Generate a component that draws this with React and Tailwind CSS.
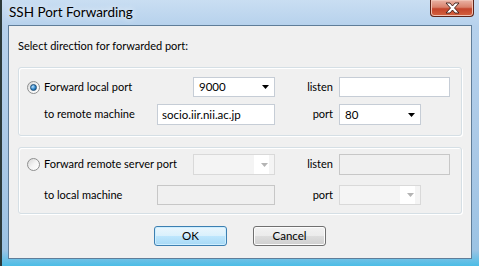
import React from 'react';

const font = { fontFamily: 'Lato, "Noto Sans", sans-serif' };

function Radio({ checked }) {
  return (
    <span className="relative flex h-[13px] w-[13px] shrink-0 items-center justify-center rounded-full border border-[#8e8f8f] bg-gradient-to-br from-[#d6d6d6] via-[#f4f4f4] to-[#ffffff]">
      {checked && (
        <span className="h-[7px] w-[7px] rounded-full border border-[#1b4d76] bg-[radial-gradient(circle_at_35%_35%,#bfe3ff,#2a83c8_55%,#0e4d8a)]" />
      )}
    </span>
  );
}

function Combo({ value, width, height, disabled }) {
  return (
    <div
      className={`flex items-center justify-between border pl-[5px] pr-[5px] ${
        disabled ? 'border-[#d9d9d9] bg-[#f4f4f4]' : 'border-[#c6cdd6] bg-white'
      }`}
      style={{ width, height }}
    >
      <span className="text-[11.5px] leading-none text-black">{value}</span>
      <div className={`flex h-full items-center ${disabled ? 'border-l border-white bg-white pl-[6px] pr-[1px]' : ''}`}>
        <svg width="7" height="4" viewBox="0 0 7 4">
          <path d="M0 0 H7 L3.5 4 Z" fill={disabled ? '#b4b4b4' : '#000'} />
        </svg>
      </div>
    </div>
  );
}

function Field({ value, width, height, disabled }) {
  return (
    <div
      className={`flex items-center border pl-[4px] text-[11.5px] leading-none text-black ${
        disabled ? 'border-[#c7c7c7] bg-[#f0f0f0]' : 'border-[#c6cdd6] bg-white'
      }`}
      style={{ width, height }}
    >
      {value}
    </div>
  );
}

function Group({ checked, title, second, disabled, combo, host, listen, port, pad }) {
  return (
    <div
      className={`mx-[9px] flex flex-col rounded-[3px] border border-[#d5dfe5] shadow-[inset_1px_1px_0_#ffffff,1px_1px_0_#ffffff] ${pad}`}
    >
      <div className={`flex items-center ${disabled ? 'h-[21px]' : 'h-[20px]'}`}>
        <div className="flex w-[174px] items-center gap-[4px] whitespace-nowrap pl-[8px]">
          <Radio checked={checked} />
          <span className="text-[11px] text-black">{title}</span>
        </div>
        <Combo value={combo} width={82} height={disabled ? 21 : 20} disabled={disabled} />
        <div className="w-[64px] pr-[6px] text-right text-[11px] text-black">listen</div>
        <Field value={listen} width={111} height={disabled ? 21 : 20} disabled={disabled} />
      </div>
      <div className={`flex items-center ${disabled ? 'mt-[10px] h-[20px]' : 'mt-[7px] h-[21px]'}`}>
        <div className="w-[138px] whitespace-nowrap pl-[25px] text-[11px] text-black">{second}</div>
        <Field value={host} width={118} height={disabled ? 20 : 21} disabled={disabled} />
        <div className="w-[64px] pr-[6px] text-right text-[11px] text-black">port</div>
        <Combo value={port} width={82} height={disabled ? 20 : 21} disabled={disabled} />
      </div>
    </div>
  );
}

function Button({ label, primary }) {
  return (
    <div
      className={`flex h-[20px] w-[73px] items-center justify-center rounded-[3px] border text-[11.5px] text-black ${
        primary
          ? 'border-[#3c7fb1] bg-[linear-gradient(#eaf6fd_0%,#d9f0fc_50%,#bee6fd_50%,#a7d9f5_100%)] shadow-[inset_0_0_0_1px_#cdeeff]'
          : 'border-[#707070] bg-[linear-gradient(#f2f2f2_0%,#ebebeb_50%,#dddddd_50%,#cfcfcf_100%)] shadow-[inset_0_0_0_1px_#fcfcfc]'
      }`}
    >
      {label}
    </div>
  );
}

export default function App() {
  return (
    <div
      className="relative h-[266px] w-[479px] overflow-hidden border-l-2 border-[#2c3a3a] bg-[linear-gradient(180deg,#c9def2_0%,#b6d1ec_10%,#a9c8e6_60%,#9cc3e4_94%,#4cbde6_100%)]"
      style={font}
    >
      <div className="flex h-[25px] items-start pl-[7px] pt-[4px]">
        <span className="text-[13.5px] leading-[16px] text-black [text-shadow:0_0_6px_#ffffff]">SSH Port Forwarding</span>
      </div>

      <div className="absolute right-[5px] top-0 flex h-[17px] w-[44px] items-center justify-center rounded-b-[4px] border border-t-0 border-[#5e2419] bg-[linear-gradient(#eab3a5_0%,#d9826c_45%,#c4452c_55%,#d4623f_100%)] shadow-[inset_0_0_0_1px_#f0c2b4]">
        <svg width="15" height="12" viewBox="0 0 15 12">
          <path
            d="M1 1 H5 L7.5 4 L10 1 H14 L9.5 6 L14 11 H10 L7.5 8 L5 11 H1 L5.5 6 Z"
            fill="#ffffff"
            stroke="#3a1c16"
            strokeWidth="0.9"
            strokeLinejoin="round"
          />
        </svg>
      </div>

      <div className="ml-[6px] flex h-[234px] w-[464px] flex-col border border-[#5f7d99] bg-[#f0f0f0]">
        <div className="mt-[12px] pl-[9px] text-[11px] leading-[16px] text-black">Select direction for forwarded port:</div>
        <div className="mt-[13px]">
          <Group
            checked
            title="Forward local port"
            second="to remote machine"
            combo="9000"
            host="socio.iir.nii.ac.jp"
            listen=""
            port="80"
            pad="pt-[9px] pb-[10px]"
          />
        </div>
        <div className="mt-[11px]">
          <Group
            disabled
            title="Forward remote server port"
            second="to local machine"
            combo=""
            host=""
            listen=""
            port=""
            pad="pt-[6px] pb-[8px]"
          />
        </div>
        <div className="mt-[12px] flex justify-center gap-[26px]">
          <Button label="OK" primary />
          <Button label="Cancel" />
        </div>
      </div>
    </div>
  );
}
